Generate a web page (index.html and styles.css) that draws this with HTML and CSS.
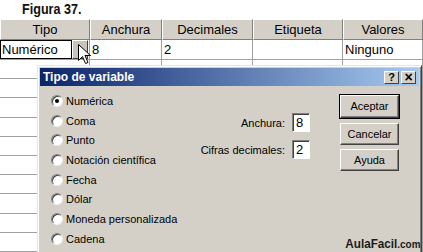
FILE: index.html
```
<!DOCTYPE html>
<html lang="es">
<head>
    <meta charset="UTF-8">
    <title>Figura 37</title>
    <link rel="stylesheet" href="styles.css">
</head>
<body>
    <div class="page">
        <div class="caption"><span>Figura 37.</span></div>

        <!-- Data view grid -->
        <div class="grid">
            <div class="head">Tipo</div>
            <div class="head">Anchura</div>
            <div class="head">Decimales</div>
            <div class="head">Etiqueta</div>
            <div class="head">Valores</div>

            <div class="cell type-cell">
                <span class="type-box">Numérico</span>
                <span class="type-btn"></span>
            </div>
            <div class="cell">8</div>
            <div class="cell">2</div>
            <div class="cell"></div>
            <div class="cell">Ninguno</div>

            <div class="cell"></div><div class="cell"></div><div class="cell"></div><div class="cell"></div><div class="cell"></div>
            <div class="cell"></div><div class="cell"></div><div class="cell"></div><div class="cell"></div><div class="cell"></div>
            <div class="cell"></div><div class="cell"></div><div class="cell"></div><div class="cell"></div><div class="cell"></div>
            <div class="cell"></div><div class="cell"></div><div class="cell"></div><div class="cell"></div><div class="cell"></div>
            <div class="cell"></div><div class="cell"></div><div class="cell"></div><div class="cell"></div><div class="cell"></div>
            <div class="cell"></div><div class="cell"></div><div class="cell"></div><div class="cell"></div><div class="cell"></div>
            <div class="cell"></div><div class="cell"></div><div class="cell"></div><div class="cell"></div><div class="cell"></div>
            <div class="cell"></div><div class="cell"></div><div class="cell"></div><div class="cell"></div><div class="cell"></div>
            <div class="cell"></div><div class="cell"></div><div class="cell"></div><div class="cell"></div><div class="cell"></div>
            <div class="cell"></div><div class="cell"></div><div class="cell"></div><div class="cell"></div><div class="cell"></div>
        </div>

        <!-- mouse pointer over the dropdown -->
        <svg class="cursor" width="13" height="21" viewBox="0 0 13 21">
            <path d="M0.5 0.5 L0.5 16.5 L4.5 12.5 L7.5 19.5 L10 18.5 L7 11.5 L12.5 11.5 Z" fill="#fff" stroke="#000" stroke-width="1"/>
        </svg>

        <!-- Dialog -->
        <div class="dialog">
            <div class="titlebar">
                <span class="title">Tipo de variable</span>
                <div class="tb-btns">
                    <span class="tb-btn">?</span>
                    <span class="tb-btn close">×</span>
                </div>
            </div>
            <div class="dlg-body">
                <div class="radios">
                    <div class="radio"><span class="dot checked"></span>Numérica</div>
                    <div class="radio"><span class="dot"></span>Coma</div>
                    <div class="radio"><span class="dot"></span>Punto</div>
                    <div class="radio"><span class="dot"></span>Notación científica</div>
                    <div class="radio"><span class="dot"></span>Fecha</div>
                    <div class="radio"><span class="dot"></span>Dólar</div>
                    <div class="radio"><span class="dot"></span>Moneda personalizada</div>
                    <div class="radio"><span class="dot"></span>Cadena</div>
                </div>
                <div class="fields">
                    <div class="field"><label>Anchura:</label><span class="input">8</span></div>
                    <div class="field"><label>Cifras decimales:</label><span class="input">2</span></div>
                </div>
                <div class="buttons">
                    <div class="btn default">Aceptar</div>
                    <div class="btn">Cancelar</div>
                    <div class="btn">Ayuda</div>
                </div>
            </div>
        </div>

        <div class="brand">AulaFacil<span>.com</span></div>
    </div>
</body>
</html>
```

FILE: styles.css
```
body {
    margin: 0;
    font-family: "Liberation Sans", Arial, sans-serif;
    background: #fff;
}
.page {
    position: relative;
    width: 423px;
    height: 252px;
    overflow: hidden;
}
.caption {
    height: 19px;
    line-height: 18px;
    padding-left: 22px;
    font-weight: bold;
    font-size: 15px;
    color: #111;
}
.caption span {
    display: inline-block;
    transform: scaleX(0.84); /* narrow face */
    transform-origin: left;
}

/* grid */
.grid {
    display: grid;
    grid-template-columns: 90px 72px 91px 90px 80px;
    grid-template-rows: 21px 20px;
    grid-auto-rows: 19.2px;
    font-size: 13px;
    color: #000;
}
.head {
    box-sizing: border-box;
    background: #d4d0c8;
    border-top: 1px solid #fff;
    border-left: 1px solid #fff;
    border-right: 1px solid #808080;
    border-bottom: 1px solid #808080;
    text-align: center;
    line-height: 19px;
}
.cell {
    box-sizing: border-box;
    border-right: 1px solid #a0a0a0;
    border-bottom: 1px solid #a0a0a0;
    line-height: 19px;
    padding-left: 2px;
    white-space: nowrap;
}
.type-cell {
    display: flex;
    padding-left: 0;
}
.type-box {
    box-sizing: border-box;
    width: 72px;
    height: 19px;
    border: 1px solid #000;
    padding-left: 1px;
    line-height: 17px;
    background: #fff;
}
.type-btn {
    box-sizing: border-box;
    width: 16px;
    height: 19px;
    background: #c8c4bc;
    border-top: 1px solid #fff;
    border-left: 1px solid #fff;
    border-right: 1px solid #404040;
    border-bottom: 1px solid #404040;
}
.cursor {
    position: absolute;
    left: 78px;
    top: 44px;
}

/* dialog */
.dialog {
    position: absolute;
    left: 37px;
    top: 65px;
    width: 385px;
    height: 200px;
    box-sizing: border-box;
    background: #d4d0c8;
    border: 1px solid;
    border-color: #e8e6e0 #404040 #404040 #e8e6e0;
    box-shadow: inset 1px 1px #fff, inset -1px -1px #808080;
    padding: 2px;
    font-size: 11px;
    color: #000;
}
.titlebar {
    height: 18px;
    display: flex;
    align-items: center;
    justify-content: space-between;
    background: linear-gradient(to right, #0a246a, #a6caf0);
    padding: 0 3px 0 3px;
}
.title {
    color: #fff;
    font-weight: bold;
    font-size: 12px;
}
.tb-btns {
    display: flex;
    gap: 2px;
}
.tb-btn {
    box-sizing: border-box;
    width: 15px;
    height: 13px;
    background: #d4d0c8;
    border-top: 1px solid #fff;
    border-left: 1px solid #fff;
    border-right: 1px solid #404040;
    border-bottom: 1px solid #404040;
    font-weight: bold;
    font-size: 11px;
    line-height: 11px;
    text-align: center;
    color: #000;
}
.tb-btn.close {
    font-size: 14px;
}
.dlg-body {
    display: flex;
}
.radios {
    width: 144px;
    padding: 5px 0 0 11px;
}
.radio {
    display: flex;
    align-items: center;
    gap: 3px;
    height: 19.7px;
    white-space: nowrap;
}
.dot {
    position: relative;
    box-sizing: border-box;
    width: 12px;
    height: 12px;
    border-radius: 50%;
    background: #fff;
    border: 1px solid;
    border-color: #808080 #f0f0f0 #f0f0f0 #808080;
    box-shadow: inset 1px 1px #404040;
}
.dot.checked::after {
    content: "";
    position: absolute;
    left: 3px;
    top: 3px;
    width: 4px;
    height: 4px;
    border-radius: 50%;
    background: #000;
}
.fields {
    width: 115px;
    padding-top: 27px;
    display: flex;
    flex-direction: column;
    gap: 8px;
}
.field {
    display: flex;
    justify-content: flex-end;
    align-items: center;
    gap: 7px;
}
.input {
    box-sizing: border-box;
    width: 18px;
    height: 19px;
    background: #fff;
    border: 1px solid;
    border-color: #808080 #fff #fff #808080;
    box-shadow: inset 1px 1px #404040;
    padding-left: 3px;
    font-size: 13px;
    line-height: 17px;
}
.buttons {
    margin-left: 30px;
    padding-top: 9px;
    display: flex;
    flex-direction: column;
    gap: 4px;
}
.btn {
    box-sizing: border-box;
    width: 59px;
    height: 22px;
    background: #d4d0c8;
    border: 1px solid;
    border-color: #fff #404040 #404040 #fff;
    box-shadow: inset -1px -1px #808080;
    text-align: center;
    line-height: 20px;
    font-size: 11px;
}
.btn.default {
    height: 23px;
    outline: 1px solid #000;
    margin-bottom: 1px;
}

.brand {
    position: absolute;
    right: 3px;
    bottom: 1px;
    font-weight: bold;
    font-size: 13px;
    color: #1a1a1a;
    transform: scaleX(0.9);
    transform-origin: right;
}
.brand span {
    font-size: 11px;
}
```
